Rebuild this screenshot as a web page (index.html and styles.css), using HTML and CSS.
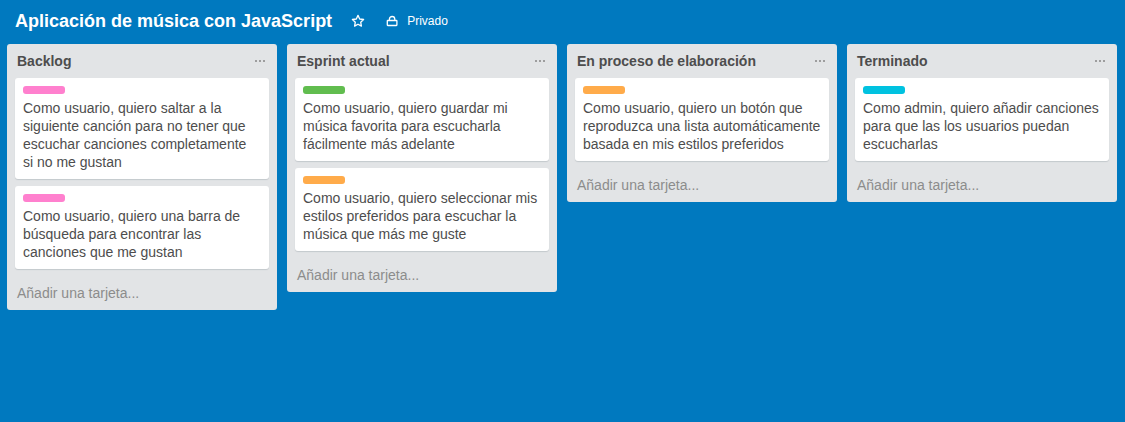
FILE: index.html
```html
<!DOCTYPE html>
<html lang="es">
<head>
<meta charset="utf-8">
<meta name="viewport" content="width=device-width, initial-scale=1">
<title>Aplicación de música con JavaScript</title>
<link rel="stylesheet" href="styles.css">
</head>
<body>
<header class="board-header">
  <h1 class="board-title">Aplicación de música con JavaScript</h1>
  <button class="header-button star-button" type="button" aria-label="Marcar como favorito">
    <svg class="star-icon" viewBox="0 0 14 14" aria-hidden="true"><path d="M7 1.400 8.700 5l3.900.5-2.900 2.700.7 3.900L7 10.200l-3.400 1.900.7-3.900L1.400 5.500 5.300 5z"/></svg>
  </button>
  <button class="header-button" type="button">
    <svg class="lock-icon" viewBox="0 0 12 12" aria-hidden="true"><rect x="1.300" y="5.500" width="9.600" height="5" rx="0.500"/><path d="M3.400 5.500V4.200a2.700 2.700 0 0 1 5.400 0v1.300"/></svg>
    <span>Privado</span>
  </button>
</header>
<main class="board">
  <section class="list">
    <header class="list-header">
      <h2 class="list-title">Backlog</h2>
      <button class="list-menu" type="button" aria-label="Acciones de Backlog"><svg class="dots-icon" viewBox="0 0 10 2" aria-hidden="true"><circle cx="1" cy="1" r="1"/><circle cx="5" cy="1" r="1"/><circle cx="9" cy="1" r="1"/></svg></button>
    </header>
    <div class="cards">
      <article class="card"><span class="label label-pink"></span><p class="card-text">Como usuario, quiero saltar a la siguiente canción para no tener que escuchar canciones completamente si&nbsp;no me gustan</p></article>
      <article class="card"><span class="label label-pink"></span><p class="card-text">Como usuario, quiero una barra de búsqueda para encontrar las canciones que me gustan</p></article>
    </div>
    <button class="add-card" type="button">Añadir una tarjeta...</button>
  </section>
  <section class="list">
    <header class="list-header">
      <h2 class="list-title">Esprint actual</h2>
      <button class="list-menu" type="button" aria-label="Acciones de Esprint actual"><svg class="dots-icon" viewBox="0 0 10 2" aria-hidden="true"><circle cx="1" cy="1" r="1"/><circle cx="5" cy="1" r="1"/><circle cx="9" cy="1" r="1"/></svg></button>
    </header>
    <div class="cards">
      <article class="card"><span class="label label-green"></span><p class="card-text">Como usuario, quiero guardar mi música favorita para escucharla fácilmente más adelante</p></article>
      <article class="card"><span class="label label-orange"></span><p class="card-text">Como usuario, quiero seleccionar mis estilos preferidos para escuchar la música que más me guste</p></article>
    </div>
    <button class="add-card" type="button">Añadir una tarjeta...</button>
  </section>
  <section class="list">
    <header class="list-header">
      <h2 class="list-title">En proceso de elaboración</h2>
      <button class="list-menu" type="button" aria-label="Acciones de En proceso de elaboración"><svg class="dots-icon" viewBox="0 0 10 2" aria-hidden="true"><circle cx="1" cy="1" r="1"/><circle cx="5" cy="1" r="1"/><circle cx="9" cy="1" r="1"/></svg></button>
    </header>
    <div class="cards">
      <article class="card"><span class="label label-orange"></span><p class="card-text">Como usuario, quiero un botón que reproduzca una lista automáticamente basada en mis estilos preferidos</p></article>
    </div>
    <button class="add-card" type="button">Añadir una tarjeta...</button>
  </section>
  <section class="list">
    <header class="list-header">
      <h2 class="list-title">Terminado</h2>
      <button class="list-menu" type="button" aria-label="Acciones de Terminado"><svg class="dots-icon" viewBox="0 0 10 2" aria-hidden="true"><circle cx="1" cy="1" r="1"/><circle cx="5" cy="1" r="1"/><circle cx="9" cy="1" r="1"/></svg></button>
    </header>
    <div class="cards">
      <article class="card"><span class="label label-sky"></span><p class="card-text">Como admin, quiero añadir canciones para que las los usuarios puedan escucharlas</p></article>
    </div>
    <button class="add-card" type="button">Añadir una tarjeta...</button>
  </section>
</main>
</body>
</html>
```
FILE: styles.css
```css
* {
  box-sizing: border-box;
}

body {
  margin: 0;
  background: #0079bf;
  color: #4d4d4d;
  font: 14px/18px "Helvetica Neue", "Liberation Sans", Arial, sans-serif;
}

h1,
h2,
p {
  margin: 0;
}

button {
  padding: 0;
  border: 0;
  background: none;
  color: inherit;
  font: inherit;
  cursor: pointer;
}

svg {
  display: block;
}

.board-header {
  display: flex;
  align-items: center;
  height: 44px;
  padding: 0 15px 2px;
  color: #fff;
}

.board-title {
  font-size: 18px;
  line-height: 24px;
  white-space: nowrap;
}

.header-button {
  display: flex;
  align-items: center;
  gap: 9px;
  font-size: 12px;
}

.star-button {
  margin: 0 21px 0 19px;
}

.star-icon,
.lock-icon {
  fill: none;
  stroke: #fff;
  stroke-width: 1.3;
  stroke-linejoin: round;
}

.star-icon {
  width: 14px;
  height: 14px;
}

.lock-icon {
  width: 12px;
  height: 12px;
}

.board {
  display: grid;
  grid-template-columns: repeat(4, minmax(0, 1fr));
  align-items: start;
  gap: 10px;
  padding: 0 8px 8px 7px;
}

.list {
  border-radius: 3px;
  background: #e2e4e6;
}

.list-header {
  display: flex;
  align-items: center;
  justify-content: space-between;
  height: 34px;
  padding: 0 12px 0 10px;
}

.list-title {
  font-size: 14px;
  line-height: 18px;
}

.dots-icon {
  width: 10px;
  height: 2px;
  fill: #868686;
}

.cards {
  display: grid;
  gap: 7px;
  padding: 0 8px 7px;
}

.card {
  padding: 8px 6px 8px 8px;
  border-radius: 3px;
  background: #fff;
  box-shadow: 0 1px 1px #c4c9cc;
}

.label {
  display: block;
  width: 42px;
  height: 8px;
  margin-bottom: 5px;
  border-radius: 3px;
}

.label-pink {
  background: #ff80ce;
}

.label-green {
  background: #61bd4f;
}

.label-orange {
  background: #ffab4a;
}

.label-sky {
  background: #00c2e0;
}

.add-card {
  display: block;
  width: 100%;
  padding: 8px 10px;
  color: #8c8c8c;
  text-align: left;
}
```
